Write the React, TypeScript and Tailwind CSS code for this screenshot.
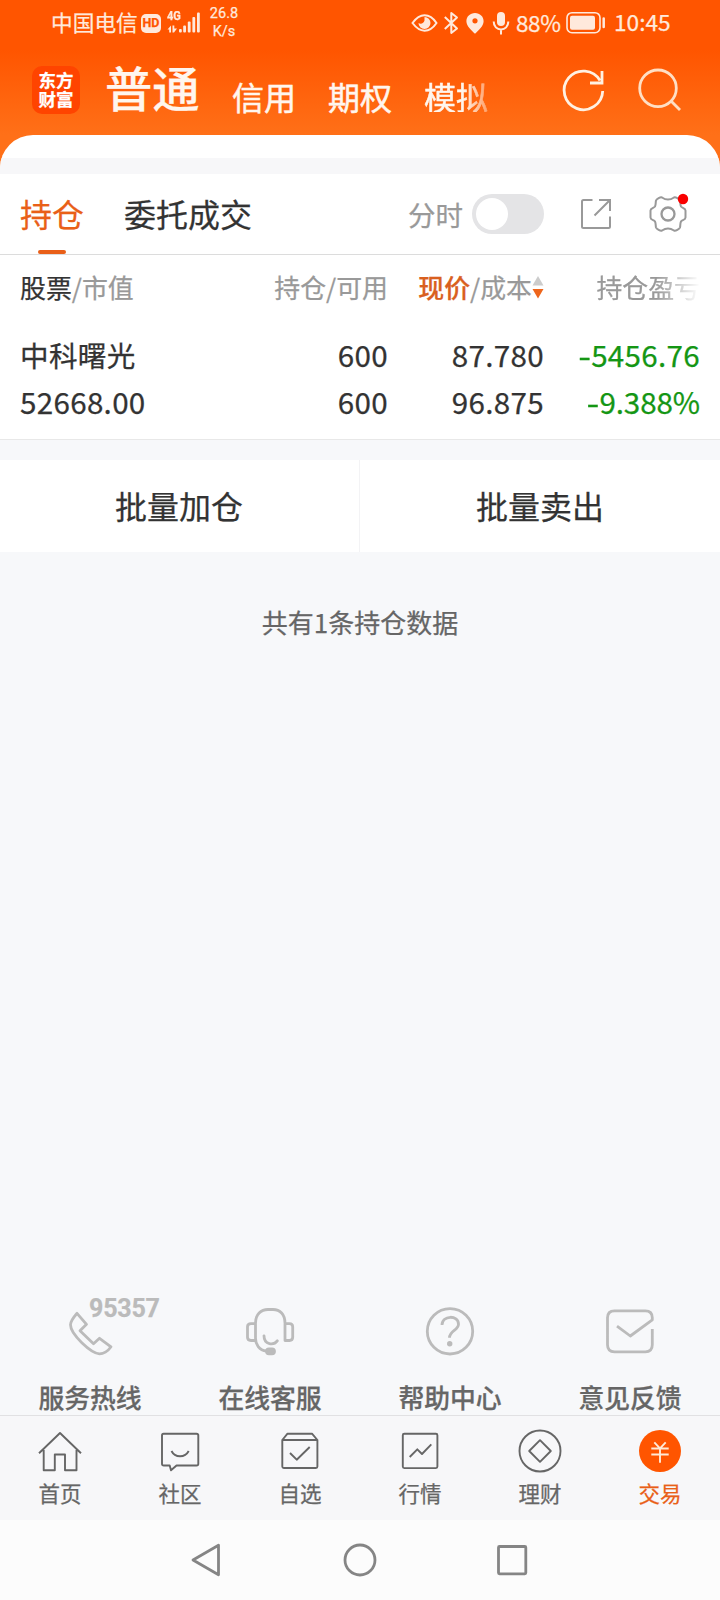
import type { ReactNode } from "react";

function StatusBar() {
  return (
    <div className="flex h-[46px] items-start text-[#ffe9dc]">
      <span className="ml-[51px] w-[87px] pt-[11px] text-[21.7px] leading-[22px] whitespace-nowrap">中国电信</span>
      <span className="mt-[14px] ml-[3px] flex h-[19px] w-[20px] items-center justify-center rounded-[5px] bg-[#ffe9dc] font-['Roboto'] text-[12.5px] font-bold text-[#ff5500]">
        HD
      </span>
      <div className="ml-[6px] flex h-[46px] w-[36px] flex-col">
        <span className="mt-[10px] h-[12px] origin-left scale-x-[0.85] font-['Roboto'] text-[13px] leading-[12px] font-bold">4G</span>
        <svg className="-mt-[11px]" width="36" height="24" viewBox="0 0 36 24" fill="currentColor">
          <path d="M.5 18.500 4 14.500v7H2.200V18.500ZM5.500 14.500h1.800v3h2.700L7 21.500H5.500Z" />
          <rect x="12" y="18" width="2.800" height="3.500" rx="1" />
          <rect x="16.200" y="14.500" width="2.800" height="7" rx="1" />
          <rect x="20.800" y="10.500" width="2.800" height="11" rx="1" />
          <rect x="25.400" y="6" width="2.800" height="15.500" rx="1" />
          <rect x="30" y="1.500" width="2.800" height="20" rx="1" />
        </svg>
      </div>
      <div className="ml-[6px] w-[30px] pt-[5px] text-center font-['Roboto'] text-[14.5px] leading-[18px]">
        <div>26.8</div>
        <div>K/s</div>
      </div>
      <svg className="ml-[171px]" width="102" height="46" viewBox="410 0 102 46" fill="none" stroke="currentColor" strokeWidth="2">
        <path d="M412.500 23C417 17 421 15.300 424.500 15.300s8 1.700 12 7.700c-4 6-8 7.700-12 7.700s-7.500-1.700-12-7.700Z" />
        <path d="M424.500 17a6 6 0 1 1-6 6c2 1.500 5.500.500 6-2.500Z" fill="currentColor" stroke="none" />
        <path d="M444.800 17 457 28.500 451.300 33V13L457 17.500 444.800 29" strokeLinejoin="round" />
        <path d="M475 13c-5 0-8.600 3.600-8.600 8.300 0 5 5 9 8.600 12.500 3.600-3.500 8.600-7.500 8.600-12.500 0-4.700-3.600-8.300-8.600-8.300Zm0 5.200a2.600 2.600 0 1 1 0 5.200 2.600 2.600 0 0 1 0-5.200Z" fill="currentColor" fillRule="evenodd" stroke="none" />
        <rect x="497" y="12" width="8" height="14" rx="4" fill="currentColor" stroke="none" />
        <path d="M493.700 21.500c0 5 3.300 8 7.300 8s7.300-3 7.300-8M501 29v5.500" />
      </svg>
      <span className="ml-[4px] w-[46px] pt-[11px] text-[22.5px] leading-[22px] tracking-[-0.4px]">88%</span>
      <svg className="ml-[2px]" width="44" height="46" viewBox="0 0 44 46" fill="none" stroke="currentColor">
        <rect x="3" y="12.700" width="33" height="20" rx="5" strokeWidth="1.600" />
        <rect x="6" y="15.700" width="25" height="14" rx="2" fill="currentColor" stroke="none" />
        <path d="M39.700 18.500v8.500" strokeWidth="2.500" strokeLinecap="round" />
      </svg>
      <span className="ml-[6px] w-[60px] pt-[11px] text-[22.7px] leading-[22px]">10:45</span>
    </div>
  );
}

function TopTabs() {
  return (
    <div className="flex h-[89px] items-center text-[#fff6ee]">
      <div className="-mt-px ml-[32px] flex h-[48px] w-[48px] items-center justify-center rounded-[10px] bg-[#ff4400] pb-[2px] text-[17.5px] leading-[19.5px] font-bold text-white">
        <p>
          东方
          <br />
          财富
        </p>
      </div>
      <span className="ml-[25px] w-[96px] pb-[7px] text-[47.3px] leading-[48px] font-medium whitespace-nowrap">普通</span>
      <div className="ml-[31px] flex gap-8 pt-[10px] text-[32px] leading-8 [-webkit-text-stroke:0.5px_currentColor]">
        <span>信用</span>
        <span>期权</span>
        <span className="[mask-image:linear-gradient(to_right,black_60%,rgba(0,0,0,0.4))]">模拟</span>
      </div>
      <svg className="ml-[72px]" width="130" height="89" viewBox="560 46 130 89" fill="none" strokeWidth="2.800">
        <path d="M602.700 91A19.300 19.300 0 1 1 600 80.500M602 71v12H590" stroke="#fff1e2" />
        <g stroke="#ffdfc4">
          <circle cx="658" cy="88.300" r="18.300" />
          <path d="m671 101 9 9" />
        </g>
      </svg>
    </div>
  );
}

function SectionTabs() {
  return (
    <div className="flex h-[81px] items-center border-b border-[#dcdcdc] bg-white pb-px pl-5">
      <div className="relative flex h-full w-16 items-center pb-[2px] text-[32px] leading-8 text-[#e95f18]">
        持仓
        <span className="absolute -bottom-px left-[18px] h-1 w-7 rounded-sm bg-[#e95f18]" />
      </div>
      <span className="ml-10 w-32 pb-[2px] text-[32px] leading-8 text-[#333]">委托成交</span>
      <span className="ml-[156px] w-[56px] text-[27.5px] leading-7 text-[#999]">分时</span>
      <div className="ml-[8px] flex h-10 w-[72px] items-center rounded-full bg-[#e4e4e6] px-1">
        <div className="h-8 w-8 rounded-full bg-white" />
      </div>
      <svg className="ml-[26px]" width="130" height="60" viewBox="570 184 130 60" fill="none" stroke="#999" strokeWidth="2">
        <path d="M592.500 200H583.500q-1.500 0-1.500 1.500V226.500q0 1.500 1.500 1.500H608.500q1.500 0 1.500-1.500V216.500M599 200h11v11M610 200 594.500 215.500" />
        <g transform="translate(668 214)">
          <path d="M0-14.500C3-14.500 4.500-15.500 6-16.500 7.500-17.300 11.500-15 12-13.500 12.500-11.500 12-9.500 13-7.500 14-6 17.500-6 17.500-3.500V3.500C17.500 6 14 6 13 7.500 12 9.500 12.500 11.500 12 13.500 11.500 15 7.500 17.300 6 16.500 4.500 15.500 3 14.500 0 14.500S-4.500 15.500-6 16.500C-7.500 17.300-11.500 15-12 13.500-12.500 11.500-12 9.500-13 7.500-14 6-17.500 6-17.500 3.500V-3.500C-17.500-6-14-6-13-7.500-12-9.500-12.500-11.500-12-13.500-11.500-15-7.500-17.300-6-16.500-4.500-15.500-3-14.500 0-14.500Z" />
          <circle r="6.500" strokeWidth="2.300" />
          <circle cx="15" cy="-15" r="5.200" fill="#f90000" stroke="none" />
        </g>
      </svg>
    </div>
  );
}

const columns = "grid grid-cols-[160px_208px_156px_156px] px-5";

function Holdings() {
  return (
    <div className="h-[185px] border-b border-[#e8e8e8] bg-white text-[#333]">
      <div className={`${columns} h-[63px] items-center text-[25.9px] leading-7 whitespace-nowrap text-[#999]`}>
        <div>
          <span className="text-[#333]">股票</span>/市值
        </div>
        <div className="text-right">持仓/可用</div>
        <div className="flex items-center justify-end">
          <span className="font-medium text-[#d9601f]">现价</span>
          <span>/成本</span>
          <svg width="12" height="24" viewBox="0 0 12 24">
            <path d="M6 1 11.500 10.500H.5Z" fill="#ccc" />
            <path d="M6 23.500 11.500 14H.5Z" fill="#ee661c" />
          </svg>
        </div>
        <div className="text-right">
          <span className="[mask-image:linear-gradient(to_right,black_58%,transparent)]">持仓盈亏</span>
        </div>
      </div>
      <div className={`${columns} mt-[13px] h-[47.5px] items-center text-right text-[29.6px] leading-[30px] tracking-[0.3px]`}>
        <span className="text-left text-[28.6px]">中科曙光</span>
        <span>600</span>
        <span>87.780</span>
        <span className="text-[#149614]">
          <span className="inline-block origin-right scale-x-125">-</span>5456.76
        </span>
      </div>
      <div className={`${columns} h-[47.5px] items-center text-right text-[29.6px] leading-[30px] tracking-[0.3px]`}>
        <span className="text-left">52668.00</span>
        <span>600</span>
        <span>96.875</span>
        <span className="tracking-[-0.1px] text-[#149614]">
          <span className="inline-block origin-right scale-x-125">-</span>9.388%
        </span>
      </div>
    </div>
  );
}

function Service({ label, badge, children }: { label: string; badge?: string; children: ReactNode }) {
  return (
    <div className="flex w-[180px] flex-col items-center">
      <div className="relative h-[92px] w-[180px]">
        <svg width="180" height="80" viewBox="0 0.7 180 80" fill="none" stroke="#bbb" strokeWidth="2.800" strokeLinejoin="round" strokeLinecap="round">
          {children}
        </svg>
        {badge && (
          <span className="absolute top-[5px] left-[89px] font-['Roboto'] text-[25px] leading-[26px] font-bold tracking-[-0.2px] text-[#bbb]">
            {badge}
          </span>
        )}
      </div>
      <span className="text-[25.8px] leading-[28px] font-medium text-[#666]">{label}</span>
    </div>
  );
}

function Tab({ label, active, children }: { label: string; active?: boolean; children: ReactNode }) {
  return (
    <div className={`flex w-[120px] flex-col items-center ${active ? "text-[#e95f18]" : "text-[#666]"}`}>
      <svg width="120" height="57" viewBox="0 -9 120 57" fill="none" stroke="currentColor" strokeWidth="1.900" strokeLinejoin="round">
        {children}
      </svg>
      <span className="mt-[9px] text-[21.5px] leading-[22px]">{label}</span>
    </div>
  );
}

export default function App() {
  return (
    <div className="flex h-[1600px] w-[720px] flex-col overflow-hidden bg-[#f7f8fa] font-['Noto_Sans_CJK_SC',sans-serif] [-webkit-text-stroke:0.25px_currentColor]">
      <header className="h-[174px] shrink-0 bg-[linear-gradient(to_bottom,#ff5500_0px,#ff5500_50px,#ff7018_135px,#ff7018_174px)]">
        <StatusBar />
        <TopTabs />
        <div className="h-[39px] overflow-hidden rounded-t-[33px] bg-white pt-[23px]">
          <div className="h-4 bg-[#f7f7f9]" />
        </div>
      </header>
      <SectionTabs />
      <Holdings />
      <div className="mt-5 flex h-[92px] shrink-0 bg-white text-[32px] leading-8 text-[#333]">
        <div className="flex w-[360px] items-center justify-center border-r border-[#f3f3f5] pr-px pb-[2px]">批量加仓</div>
        <div className="flex flex-1 items-center justify-center pb-[2px]">批量卖出</div>
      </div>
      <p className="mt-[56px] text-center text-[26px] leading-[28px] text-[#666]">共有1条持仓数据</p>
      <div className="mt-auto flex h-[125px] shrink-0 border-b border-[#e1e1e3]">
        <Service label="服务热线" badge="95357">
          <path d="M77 23 86.500 34 80 40.500 93.500 53.500 99.500 48 111 56.500C108 61 103 63.500 99.500 63.500 91 63 70.500 44 70.500 34.500 70.500 30.500 74 26.500 77 23Z" />
        </Service>
        <Service label="在线客服">
          <path d="M86.500 60.700C79 60 75.500 54 75.500 48V33C75.500 24 81 19.200 88 19.200H93C100 19.200 105 24 105 33V50.200H109.500Q112.700 50.200 112.700 47V36.500Q112.700 33.300 109.500 33.300H105M75.500 50.200H71Q67.500 50.200 67.500 47V36.500Q67.500 33.300 71 33.300H75.500M84 45.500C84 55 94 55 97.300 50.500" />
          <rect x="86.500" y="58.500" width="8" height="5" rx="2.500" fill="#bbb" />
        </Service>
        <Service label="帮助中心">
          <circle cx="90" cy="41" r="22.700" />
          <path d="M82 34.800C82 24.500 98.500 24.500 98.500 34 98.500 40 89.500 40.500 89.500 47.500" strokeLinecap="butt" />
          <circle cx="89.700" cy="53.500" r="2.700" fill="#bbb" stroke="none" />
        </Service>
        <Service label="意见反馈">
          <path d="M112.300 38.800V54.500Q112.300 61.500 105.300 61.500H74.500Q67.500 61.500 67.500 54.500V27.500Q67.500 20.500 74.500 20.500H105.300Q112.300 20.500 112.300 27.500V29.500L90.300 45.700 77 35.800" strokeLinecap="butt" />
        </Service>
      </div>
      <nav className="flex h-[104px] shrink-0 bg-[#f7f7f9]">
        <Tab label="首页">
          <path d="M39 28.300 60 8 81 28.300M43.700 25V45.300H54.800V29.500H65V45.300H76.500V25" />
        </Tab>
        <Tab label="社区">
          <path d="M43.500 8.700H76.500Q78.300 8.700 78.300 10.500V38.700Q78.300 40.500 76.500 40.500H56.500L51 45.300 49.700 40.500H43.800Q42 40.500 42 38.700V10.500Q42 8.700 43.500 8.700ZM51.500 26C55 33 65 33 68.700 26" />
        </Tab>
        <Tab label="自选">
          <path d="M42.300 15H77.400V41.500Q77.400 43 75.900 43H43.800Q42.300 43 42.300 41.500ZM42.300 15 47.500 8.700H72L77.400 15M50 28 56.700 34.700 69.700 22" />
        </Tab>
        <Tab label="行情">
          <rect x="42.800" y="8.700" width="34.600" height="34.400" rx="1.500" />
          <path d="M49.700 32 57.300 24.300 62 29 71.300 19.300" />
        </Tab>
        <Tab label="理财">
          <circle cx="60" cy="26" r="20.500" />
          <path d="M60 15.200 70.800 26 60 36.800 49.200 26Z" />
        </Tab>
        <Tab label="交易" active>
          <circle cx="60" cy="26" r="21" fill="#ff5500" stroke="none" />
          <path d="M54.300 17.300 60 23.300 65.700 17.300M51.300 23.500H68.700M51.300 29.500H68.700M60 23.300V37.700" stroke="#ffe9d5" />
        </Tab>
      </nav>
      <div className="flex h-20 shrink-0 items-center justify-center bg-[#fcfcfc]">
        <svg width="360" height="80" viewBox="180 0 360 80" fill="none" stroke="#858585" strokeWidth="2.800" strokeLinejoin="round">
          <path d="M193 40 218.500 25.200V54.800Z" />
          <circle cx="360" cy="40" r="15" />
          <rect x="498.500" y="26.500" width="27.300" height="27.300" rx="1" />
        </svg>
      </div>
    </div>
  );
}
